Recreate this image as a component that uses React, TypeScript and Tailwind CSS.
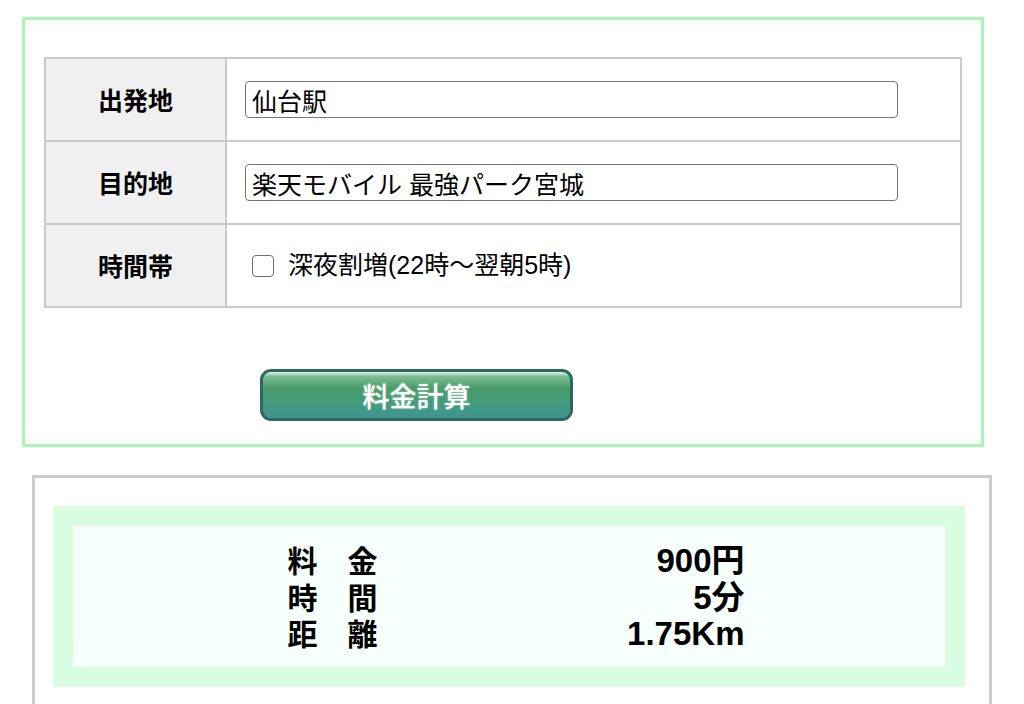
const rows = [
  { label: '料　金', value: '900円' },
  { label: '時　間', value: '5分' },
  { label: '距　離', value: '1.75Km' },
];

export default function App() {
  return (
    <div className="min-h-screen bg-white font-['Liberation_Sans','Noto_Sans_CJK_JP',sans-serif] text-black overflow-hidden">
      {/* Search form */}
      <div className="ml-[22px] mt-[17px] w-[962px] h-[430px] border-[3px] border-[#a6f7b9] px-[19px] pt-[37px]">
        <div className="border-2 border-[#cacaca]">
          <div className="flex h-[81px]">
            <div className="w-[181px] shrink-0 bg-[#f0f0f0] border-r-2 border-[#cacaca] flex items-center justify-center text-[25px] font-bold font-['Noto_Sans_CJK_JP',sans-serif]">
              出発地
            </div>
            <div className="flex-1 flex items-center pl-[18px]">
              <input
                readOnly
                value="仙台駅"
                className="w-[653px] h-[37px] border-[1.5px] border-[#767676] rounded-[4px] px-[6px] text-[25px] leading-none outline-none"
              />
            </div>
          </div>
          <div className="flex h-[83px] border-t-2 border-[#cacaca]">
            <div className="w-[181px] shrink-0 bg-[#f0f0f0] border-r-2 border-[#cacaca] flex items-center justify-center text-[25px] font-bold font-['Noto_Sans_CJK_JP',sans-serif]">
              目的地
            </div>
            <div className="flex-1 flex items-center pl-[18px]">
              <input
                readOnly
                value="楽天モバイル 最強パーク宮城"
                className="w-[653px] h-[37px] border-[1.5px] border-[#767676] rounded-[4px] px-[6px] text-[25px] leading-none outline-none"
              />
            </div>
          </div>
          <div className="flex h-[83px] border-t-2 border-[#cacaca]">
            <div className="w-[181px] shrink-0 bg-[#f0f0f0] border-r-2 border-[#cacaca] flex items-center justify-center text-[25px] font-bold font-['Noto_Sans_CJK_JP',sans-serif]">
              時間帯
            </div>
            <div className="flex-1 flex items-center pl-[25px] gap-[14px] text-[25px]">
              <span className="w-[22px] h-[22px] border-[1.5px] border-[#6f6f6f] rounded-[4px] bg-white" />
              <span>深夜割増(22時～翌朝5時)</span>
            </div>
          </div>
        </div>
        <button className="ml-[216px] mt-[61px] w-[313px] h-[52px] rounded-[11px] border-[3px] border-[#2e6862] bg-[linear-gradient(to_bottom,#e2f3e6_0%,#7cbd95_10%,#4a9c69_35%,#439a7e_70%,#3f9590_100%)] text-white text-[27px] font-medium leading-none font-['Noto_Sans_CJK_JP',sans-serif] [text-shadow:0_0_2px_rgba(255,255,255,0.7)]">
          料金計算
        </button>
      </div>

      {/* Result */}
      <div className="ml-[32px] mt-[28px] w-[960px] h-[260px] border-[3px] border-b-0 border-[#cccccc] pl-[18px] pt-[28px]">
        <div className="w-[912px] p-[20px] bg-[#d8fde1]">
          <div className="h-[141px] bg-[#f7fffa] py-[15px] flex justify-center">
            <div className="w-[457px] ml-[14px]">
              {rows.map((r) => (
                <div key={r.label} className="flex justify-between items-baseline h-[36.5px] leading-[36px]">
                  <span className="text-[30px] font-bold font-['Noto_Sans_CJK_JP',sans-serif]">{r.label}</span>
                  <span className="text-[33px] font-bold">{r.value}</span>
                </div>
              ))}
            </div>
          </div>
        </div>
      </div>
    </div>
  );
}
